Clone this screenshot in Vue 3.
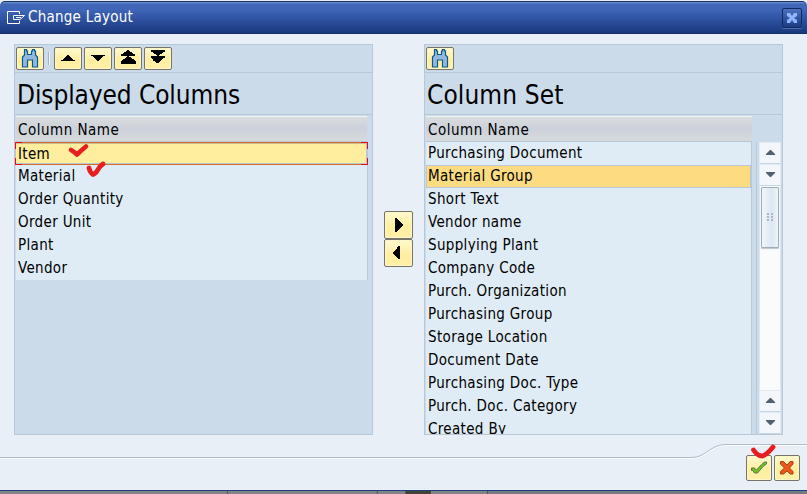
<script setup>
const displayed = ['Item', 'Material', 'Order Quantity', 'Order Unit', 'Plant', 'Vendor']
const available = [
  'Purchasing Document', 'Material Group', 'Short Text', 'Vendor name', 'Supplying Plant',
  'Company Code', 'Purch. Organization', 'Purchasing Group', 'Storage Location',
  'Document Date', 'Purchasing Doc. Type', 'Purch. Doc. Category', 'Created By',
]
const binoculars = 'M4.500 2V.5h2V2h1v3.500h4V2h1V.5h2V2h1v4l2 2v10h-5v-7h-5v7h-5V8l2-2V2z'
const moves = [
  { name: 'Up', d: 'M6 13v-1h2v-1h1v-1h1V9h1V8h1V7h2v1h1v1h1v1h1v1h1v1h2v1z' },
  { name: 'Down', d: 'M6 7v1h2v1h1v1h1v1h1v1h1v1h2v-1h1v-1h1v-1h1V9h1V8h2V7z' },
  { name: 'Top', d: 'M12 2h2v1h1v1h2v1h1v1h2v2h-6v1h2v1h1v1h2v1h1v1h1v3H6v-3h1v-1h1v-1h2v-1h1V9h1V8H6V6h2V5h1V4h2V3h1z' },
  { name: 'Bottom', d: 'M6 2h14v2h-2v1h-1v1h-2v1h-1v1h6v2h-2v1h-1v1h-1v1h-1v1h-1v1h-3v-1h-1v-1h-2v-1H8v-1H7v-1H6V8h6V7h-1V6H9V5H8V4H6z' },
]
</script>

<template>
  <div class="window">
    <header class="titlebar">
      <svg class="app-icon" width="18" height="14" viewBox="0 0 18 14" fill="none" stroke="#fff">
        <path d="M12.500 3V.5H.5v12h12V10M11.500 4.500h6L12.500 9V8.500h-6v-4h5M9 6.500h5" />
      </svg>
      <h1>Change Layout</h1>
      <button class="close" aria-label="Close">
        <svg width="12" height="12" viewBox="0 0 12 12" fill="#90b4ff">
          <path d="M1 1h3l2 3 2-3h3v3L8 6l3 2v3H8L6 8l-2 3H1V8l3-2-3-2z" />
        </svg>
      </button>
    </header>

    <main class="content">
      <section class="panel">
        <div class="toolbar">
          <button class="tool" aria-label="Find">
            <svg width="20" height="19" viewBox="0 0 20 19"><path :d="binoculars" fill="#94b8dc" stroke="#075b91" stroke-width="1.200" /></svg>
          </button>
          <i class="separator"></i>
          <button v-for="m in moves" :key="m.name" class="tool" :aria-label="m.name">
            <svg width="26" height="21" viewBox="0 0 26 21"><path :d="m.d" /></svg>
          </button>
        </div>
        <h2 class="tight">Displayed Columns</h2>
        <div class="table left">
          <div class="head">Column Name</div>
          <ul class="list">
            <li v-for="(name, i) in displayed" :key="name" :class="{ focused: i === 0 }">
              {{ name }}
              <template v-if="i === 0"><i class="corner start"></i><i class="corner end"></i></template>
            </li>
          </ul>
        </div>
      </section>

      <div class="transfer">
        <button class="tool" aria-label="Remove">
          <svg width="27" height="26" viewBox="0 0 27 26"><path d="M10 6h2v1h1v1h1v1h1v1h1v1h1v1h1v2h-1v1h-1v1h-1v1h-1v1h-1v1h-1v1h-2z" /></svg>
        </button>
        <button class="tool" aria-label="Add">
          <svg width="27" height="26" viewBox="0 0 27 26"><path d="M15 6h-2v1h-1v2h-1v1h-1v1H9v1H8v2h1v1h1v1h1v1h1v1h1v1h2z" /></svg>
        </button>
      </div>

      <section class="panel">
        <div class="toolbar">
          <button class="tool" aria-label="Find">
            <svg width="20" height="19" viewBox="0 0 20 19"><path :d="binoculars" fill="#94b8dc" stroke="#075b91" stroke-width="1.200" /></svg>
          </button>
        </div>
        <h2>Column Set</h2>
        <div class="table right">
          <div class="head">Column Name</div>
          <div class="scroll-area">
            <ul class="list">
              <li v-for="(name, i) in available" :key="name" :class="{ selected: i === 1 }">{{ name }}</li>
            </ul>
            <div class="scrollbar">
              <div class="arrow"><svg width="9" height="6"><path d="M0 5V4l4-4h1l4 4v1z" /></svg></div>
              <div class="arrow"><svg width="9" height="6"><path d="M0 0v1l4 4h1l4-4V0z" /></svg></div>
              <div class="track">
                <div class="thumb">
                  <svg width="6" height="9" stroke="#a9b8c5" stroke-width="2">
                    <path d="M0 1h6M0 4h6M0 7h6" stroke-dasharray="2 2" />
                  </svg>
                </div>
              </div>
              <div class="arrow"><svg width="9" height="6"><path d="M0 5V4l4-4h1l4 4v1z" /></svg></div>
              <div class="arrow"><svg width="9" height="6"><path d="M0 0v1l4 4h1l4-4V0z" /></svg></div>
            </div>
          </div>
        </div>
      </section>
    </main>

    <footer class="footer">
      <svg class="divider" width="807" height="20" viewBox="0 0 807 20" fill="none">
        <path d="M0 15.500H692C706 15.500 710 2.500 726 2.500H807" stroke="#fff" />
        <path d="M0 14.500H692C706 14.500 710 1.500 726 1.500H807" stroke="#afbccb" />
      </svg>
      <div class="actions">
        <button class="tool" aria-label="Continue">
          <svg width="18" height="16" viewBox="0 0 18 16">
            <path d="M1.500 8h3l2 2 5-5.500 3-2.500h2v2l-3 2-6 7h-3L3 10.500H1.500z" fill="#79bd21" stroke="#4f7950" />
          </svg>
        </button>
        <button class="tool" aria-label="Cancel">
          <svg width="16" height="16" viewBox="0 0 16 16">
            <path d="M1.500 1.500h3L8 5l3-3.500h3V4l-3.500 4 3.500 3.500V14h-3L8 11l-3.500 3h-3v-2.500L5.500 8l-4-4z" fill="#eb5717" stroke="#a1431e" />
          </svg>
        </button>
      </div>
    </footer>
    <div class="backdrop"><i></i><i></i><i></i><i></i></div>

    <svg class="marks" width="807" height="494" fill="none" stroke="#e71d20" stroke-linecap="round" stroke-linejoin="round">
      <path d="M71 150q3 1.500 6 4.500 4-4 9-8" stroke-width="4.600" />
      <path d="M89 168q1 4.500 4 6.500 3-1 5-5t5-5.500" stroke-width="4.800" />
      <path d="M753.500 450q4 6 9 6 4-1 10.500-9" stroke-width="4.800" />
    </svg>
  </div>
</template>

<style>
body { margin: 0; overflow: hidden; background: #e8eff6; }
</style>

<style scoped>
.window { position: relative; box-sizing: border-box; width: 807px; height: 494px; display: flex; flex-direction: column; overflow: hidden; background: #e8eff6; font: 15px/23px "DejaVu Sans Condensed", "DejaVu Sans", sans-serif; font-stretch: condensed; letter-spacing: .34px; color: #000; }
button { box-sizing: border-box; padding: 0; margin: 0; display: flex; align-items: center; justify-content: center; }
svg { display: block; flex: none; }
h1, h2, ul { margin: 0; padding: 0; font-weight: normal; }
.titlebar { box-sizing: border-box; height: 33px; margin-top: 1px; padding: 0 5px 0 7px; display: flex; align-items: center; border-top: 1px solid #16345f; border-bottom: 1px solid #132e6b; border-radius: 5px 5px 0 0; background: linear-gradient(#7295cf 0, #4268b9 2px, #3f65b7 8px, #2a4c9a 20px, #1a397d 31px); }
h1 { margin-left: 3px; flex: 1; color: #fff; font-size: 15px; letter-spacing: .25px; }
.close { width: 20px; height: 20px; border: 1px solid #102b60; border-radius: 2px; background: linear-gradient(#4c71bd, #1b3b84); box-shadow: 0 1px #4b70b2; }
.content { height: 391px; padding: 10px 24px 0 14px; display: flex; justify-content: space-between; }
.panel { box-sizing: border-box; width: 359px; height: 391px; border: 1px solid #b9c7d7; background: #cbdbe9; overflow: hidden; }
.toolbar { box-sizing: border-box; height: 28px; padding: 2px 1px 0; display: flex; gap: 2px; border-bottom: 1px solid #b9c7d7; }
.tool { width: 28px; height: 23px; border: 1px solid #77746c; border-radius: 2px; background: linear-gradient(#fff9cf, #ffee9f 55%, #fff0a8); box-shadow: inset 0 0 0 1px #fff6c8; }
.separator { width: 1px; height: 13px; margin: 5px 2px 0; background: #a5b3c1; border-right: 1px solid #eef4f9; }
h2 { box-sizing: border-box; height: 42px; padding: 2px 2px 0; border-bottom: 1px solid #b9c7d7; font-size: 26px; line-height: 41px; letter-spacing: .1px; white-space: nowrap; }
.tight { letter-spacing: -.1px; }
.table { height: 319px; }
.head { box-sizing: border-box; height: 26px; margin-top: 1px; padding: 2px 2px 0; border-top: 1px solid #f2f4f4; background: linear-gradient(#d9dddf, #ccd1da 50%, #d5d9dc 90%); border-bottom: 1px solid #b9c7d7; letter-spacing: .5px; }
.left { width: 352px; padding-left: 1px; }
.right { padding-left: 1px; }
.right .head { width: 326px; }
.list { list-style: none; background: #dfecf5; border-right: 1px solid #b9c7d7; }
li { box-sizing: border-box; height: 23px; padding-left: 2px; white-space: nowrap; }
.left .head, .left .list { width: 351px; }
.focused { position: relative; margin: 0 -1px; padding-left: 2px; background: #ffee9d; border: 1px solid #d27029; box-shadow: inset -1px -1px #bdc5cf, inset 0 1px #cdbb95; line-height: 22px; }
.corner { position: absolute; top: -1px; bottom: -1px; width: 7px; background: linear-gradient(#e40c19 0 1px, transparent 1px calc(100% - 1px), #e40c19 calc(100% - 1px)); }
.corner::after { content: ""; position: absolute; top: 0; bottom: 0; width: 1px; background: linear-gradient(#e40c19 0 7px, #b9c7d7 7px 16px, #e40c19 16px); }
.start { left: -1px; }
.start::after { left: 0; }
.end { right: -1px; }
.end::after { right: 0; }
.selected { background: #fddb80; border: 1px solid #b9c7d7; padding-left: 1px; line-height: 21px; }
.scroll-area { height: 292px; display: flex; }
.scroll-area .list { flex: none; box-sizing: border-box; width: 326px; height: 292px; overflow: hidden; }
.scrollbar { box-sizing: border-box; flex: none; width: 26px; margin-left: 4px; padding: 0 1px 0 2px; border-left: 1px solid #b9c7d7; display: flex; flex-direction: column; }
.arrow { box-sizing: border-box; height: 22px; width: 22px; display: flex; align-items: center; justify-content: center; background: #f3f6fa; border: 1px solid #e2eaf2; border-bottom-color: #c6d5e4; fill: #526270; }
.track { flex: 1; box-sizing: border-box; width: 22px; padding: 1px; background: #fafbfc; border: solid #dce6ef; border-width: 0 1px; }
.thumb { box-sizing: border-box; width: 18px; height: 61px; display: flex; align-items: center; justify-content: center; border: 1px solid #9eacb7; border-radius: 1px; background: linear-gradient(90deg, #f2f6fa, #dce7f1 60%, #edf3f8); box-shadow: 0 1px 1px #b9c5cf; }
.transfer { padding-top: 167px; }
.transfer .tool { width: 29px; height: 28px; }
.footer { height: 47px; margin-top: 8px; }
.actions { display: flex; gap: 2px; justify-content: flex-end; padding-right: 7px; margin-top: -8px; }
.actions .tool { width: 26px; height: 26px; }
.backdrop { position: absolute; left: 0; right: 0; bottom: 0; height: 3px; border-top: 1px solid #21407a; background: #808488; display: flex; }
.backdrop i { height: 3px; border-left: 1px solid #50565f; }
.backdrop i:nth-child(1) { margin-left: 227px; width: 149px; }
.backdrop i:nth-child(2) { width: 27px; }
.backdrop i:nth-child(3) { width: 25px; background: #454139; }
.backdrop i:nth-child(4) { margin-left: 56px; width: 318px; background: #747a83; }
.marks { position: absolute; inset: 0; pointer-events: none; }
</style>
